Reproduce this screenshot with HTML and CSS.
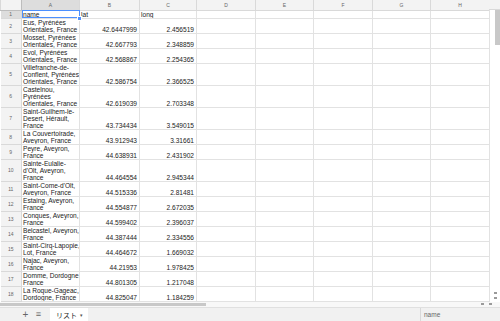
FILE: index.html
```html
<!DOCTYPE html>
<html lang="ja">
<head>
    <meta charset="UTF-8">
    <title>リスト</title>
    <link rel="stylesheet" href="styles.css">
</head>
<body>

<div class="sheet">
    <div class="grid-area">
        <table class="grid">
            <colgroup>
                <col class="c-row"><col class="c-a"><col class="c-b"><col class="c-c"><col class="c-d">
                <col class="c-e"><col class="c-f"><col class="c-g"><col class="c-h">
            </colgroup>
            <thead>
                <tr>
                    <th class="corner"></th>
                    <th class="hl">A</th><th>B</th><th>C</th><th>D</th><th>E</th><th>F</th><th>G</th><th>H</th>
                </tr>
            </thead>
            <tbody>
                <tr class="first"><th class="hl">1</th><td class="sel">name</td><td>lat</td><td>long</td><td></td><td></td><td></td><td></td><td></td></tr>
                <tr><th>2</th><td>Eus, Pyrénées<br>Orientales, France</td><td class="num">42.6447999</td><td class="num">2.456519</td><td></td><td></td><td></td><td></td><td></td></tr>
                <tr><th>3</th><td>Mosset, Pyrénées<br>Orientales, France</td><td class="num">42.667793</td><td class="num">2.348859</td><td></td><td></td><td></td><td></td><td></td></tr>
                <tr><th>4</th><td>Evol, Pyrénées<br>Orientales, France</td><td class="num">42.568867</td><td class="num">2.254365</td><td></td><td></td><td></td><td></td><td></td></tr>
                <tr><th>5</th><td>Villefranche-de-<br>Conflent, Pyrénées<br>Orientales, France</td><td class="num">42.586754</td><td class="num">2.366525</td><td></td><td></td><td></td><td></td><td></td></tr>
                <tr><th>6</th><td>Castelnou,<br>Pyrénées<br>Orientales, France</td><td class="num">42.619039</td><td class="num">2.703348</td><td></td><td></td><td></td><td></td><td></td></tr>
                <tr><th>7</th><td>Saint-Guilhem-le-<br>Desert, Hérault,<br>France</td><td class="num">43.734434</td><td class="num">3.549015</td><td></td><td></td><td></td><td></td><td></td></tr>
                <tr><th>8</th><td>La Couvertoirade,<br>Aveyron, France</td><td class="num">43.912943</td><td class="num">3.31661</td><td></td><td></td><td></td><td></td><td></td></tr>
                <tr><th>9</th><td>Peyre, Aveyron,<br>France</td><td class="num">44.638931</td><td class="num">2.431902</td><td></td><td></td><td></td><td></td><td></td></tr>
                <tr><th>10</th><td>Sainte-Eulalie-<br>d'Olt, Aveyron,<br>France</td><td class="num">44.464554</td><td class="num">2.945344</td><td></td><td></td><td></td><td></td><td></td></tr>
                <tr><th>11</th><td>Saint-Come-d'Olt,<br>Aveyron, France</td><td class="num">44.515336</td><td class="num">2.81481</td><td></td><td></td><td></td><td></td><td></td></tr>
                <tr><th>12</th><td>Estaing, Aveyron,<br>France</td><td class="num">44.554877</td><td class="num">2.672035</td><td></td><td></td><td></td><td></td><td></td></tr>
                <tr><th>13</th><td>Conques, Aveyron,<br>France</td><td class="num">44.599402</td><td class="num">2.396037</td><td></td><td></td><td></td><td></td><td></td></tr>
                <tr><th>14</th><td>Belcastel, Aveyron,<br>France</td><td class="num">44.387444</td><td class="num">2.334556</td><td></td><td></td><td></td><td></td><td></td></tr>
                <tr><th>15</th><td>Saint-Cirq-Lapopie,<br>Lot, France</td><td class="num">44.464672</td><td class="num">1.669032</td><td></td><td></td><td></td><td></td><td></td></tr>
                <tr><th>16</th><td>Najac, Aveyron,<br>France</td><td class="num">44.21953</td><td class="num">1.978425</td><td></td><td></td><td></td><td></td><td></td></tr>
                <tr><th>17</th><td>Domme, Dordogne,<br>France</td><td class="num">44.801305</td><td class="num">1.217048</td><td></td><td></td><td></td><td></td><td></td></tr>
                <tr><th>18</th><td>La Roque-Gageac,<br>Dordogne, France</td><td class="num">44.825047</td><td class="num">1.184259</td><td></td><td></td><td></td><td></td><td></td></tr>
            </tbody>
        </table>
    </div>

    <div class="vscroll">
        <div class="vscroll-head"></div>
        <div class="vscroll-track">
            <div class="vscroll-thumb"></div>
            <div class="vscroll-arrows">
                <span class="arrow"></span>
                <span class="arrow"></span>
            </div>
        </div>
    </div>
</div>

<div class="hscroll">
    <div class="hscroll-thumb"></div>
    <div class="hscroll-arrows">
        <span class="arrow"></span>
        <span class="arrow"></span>
    </div>
</div>

<div class="tabbar">
    <span class="tab-btn">+</span>
    <span class="tab-btn menu">&#8801;</span>
    <span class="tab">リスト <small>&#9662;</small></span>
    <span class="status">name</span>
</div>

</body>
</html>
```

FILE: styles.css
```css
* {
    box-sizing: border-box;
    margin: 0;
    padding: 0;
}

body {
    width: 500px;
    height: 321px;
    overflow: hidden;
    background: #FFFFFF;
    font-family: 'Liberation Sans', Arial, sans-serif;
    color: #222222;
}

.sheet {
    display: flex;
    height: 302px;
    overflow: hidden;
}

.grid-area {
    width: 489px;
    overflow: hidden;
}

.grid {
    width: 489px;
    table-layout: fixed;
    border-collapse: collapse;
}

.c-row { width: 21px; }
.c-a { width: 58px; }
.c-b { width: 60px; }
.c-c { width: 57px; }
.c-d { width: 59px; }
.c-e { width: 58px; }
.c-f { width: 59px; }
.c-g { width: 58px; }
.c-h { width: 59px; }

th {
    background: #F3F3F3;
    border: 1px solid #D9D9D9;
    font-weight: 400;
    font-size: 5px;
    color: #666666;
    text-align: center;
}

thead th {
    height: 10px;
    border-top: none;
}

tbody th {
    border-left: none;
}

th.hl {
    background: #DDDDDD;
}

th.corner {
    border-right: 1px solid #BDBDBD;
    border-bottom: 1px solid #BDBDBD;
}

td {
    border: 1px solid #E2E2E2;
    font-size: 6.6px;
    line-height: 7px;
    padding: 0 1px;
    white-space: nowrap;
    overflow: hidden;
    vertical-align: bottom;
}

td.num {
    text-align: right;
    padding-right: 2px;
}

.first td {
    height: 8px;
}

td.sel {
    position: relative;
    overflow: visible;
    outline: 1px solid #4D90FE;
    outline-offset: -1px;
}

td.sel::after {
    content: "";
    position: absolute;
    right: -2px;
    bottom: -2px;
    width: 3px;
    height: 3px;
    background: #4D90FE;
    border: 1px solid #FFFFFF;
    box-sizing: content-box;
    margin: -1px;
}

.vscroll {
    width: 11px;
    display: flex;
    flex-direction: column;
}

.vscroll-head {
    height: 10px;
    background: #F3F3F3;
    border-bottom: 1px solid #D9D9D9;
}

.vscroll-track {
    flex: 1;
    border-left: 1px solid #E2E2E2;
    display: flex;
    flex-direction: column;
    align-items: flex-end;
    justify-content: space-between;
}

.vscroll-thumb {
    width: 5px;
    height: 35px;
    background: #C8C8C8;
}

.vscroll-arrows {
    width: 10px;
    display: flex;
    flex-direction: column;
    gap: 3px;
    align-items: center;
    padding-bottom: 3px;
}

.arrow {
    width: 3px;
    height: 2px;
    background: #9A9A9A;
}

.hscroll {
    height: 6px;
    display: flex;
    justify-content: space-between;
    align-items: flex-start;
    background: #F8F8F8;
    border-bottom: 1px solid #E0E0E0;
}

.hscroll-thumb {
    width: 206px;
    height: 3px;
    background: #C8C8C8;
    margin-top: 1px;
}

.hscroll-arrows {
    display: flex;
    gap: 5px;
    padding: 1px 8px 0 0;
}

.tabbar {
    height: 13px;
    display: flex;
    align-items: stretch;
    background: #F1F1F1;
    font-size: 6.5px;
    color: #444444;
}

.tab-btn {
    display: flex;
    align-items: center;
    justify-content: center;
    width: 13px;
    font-size: 10px;
    line-height: 1;
    color: #666666;
}

.tab-btn:first-child {
    margin-left: 19px;
}

.menu {
    font-size: 9px;
}

.tab {
    display: flex;
    align-items: center;
    gap: 3px;
    margin-left: 5px;
    padding: 0 5px 0 6px;
    background: #FFFFFF;
    font-family: 'Noto Sans CJK JP', sans-serif;
    font-size: 7px;
    color: #222222;
}

.tab small {
    font-size: 5px;
    color: #555555;
}

.status {
    margin-left: auto;
    width: 80px;
    display: flex;
    align-items: center;
    padding-left: 3px;
    border-left: 1px solid #D9D9D9;
    color: #666666;
}
```
